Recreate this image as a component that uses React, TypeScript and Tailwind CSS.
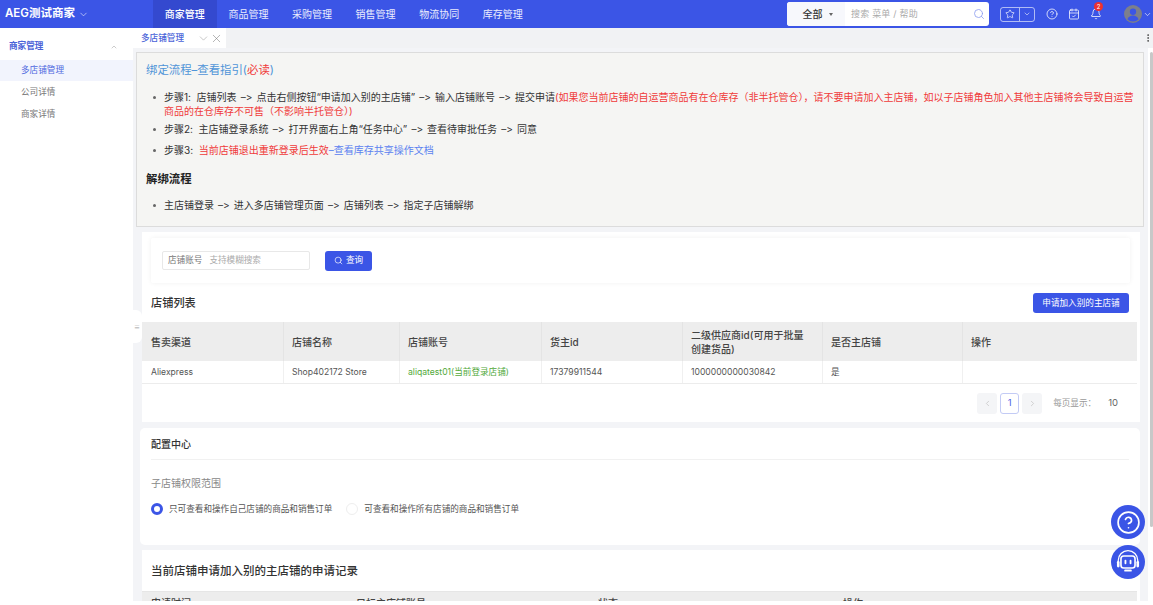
import React from "react";
import { ChevronDown, ChevronUp, ChevronLeft, ChevronRight, Search, Star, CircleHelp, CalendarCheck, Bell, X, MoreVertical } from "lucide-react";

const FONT = { fontFamily: '"Inter","Noto Sans CJK SC","Noto Sans",sans-serif' };

const NAV = ["商家管理", "商品管理", "采购管理", "销售管理", "物流协同", "库存管理"];

function Header() {
  return (
    <header className="flex h-[28px] shrink-0 items-center bg-[#3b55e6] text-white">
      <div className="flex w-[153px] shrink-0 items-center gap-[3px] pl-[5px] text-[11.5px] font-semibold">
        <span>AEG测试商家</span>
        <ChevronDown size={11} strokeWidth={1.5} className="text-white/80" />
      </div>
      <nav className="flex h-full">
        {NAV.map((n, i) => (
          <div
            key={n}
            className={`flex h-full w-[63.6px] items-center justify-center text-[10px] ${i === 0 ? "bg-[#3449cf] font-medium" : "text-white/90"}`}
          >
            {n}
          </div>
        ))}
      </nav>
      <div className="ml-auto flex h-[24px] w-[202px] items-center overflow-hidden rounded-[3px] bg-white">
        <div className="flex h-full w-[58px] items-center justify-center gap-[6px] bg-[#f7f8fc] pl-[3px] text-[10px] font-medium text-[#333]">
          全部
          <span className="mt-[1px] h-0 w-0 border-x-[2.5px] border-t-[3px] border-x-transparent border-t-[#666]" />
        </div>
        <span className="ml-[6px] flex-1 text-[9px] tracking-[0.2px] text-[#aaa]">搜索 菜单 / 帮助</span>
        <Search size={12} strokeWidth={1.6} className="mr-[4px] text-[#8a9bef]" />
      </div>
      <div className="ml-[11px] flex h-[15px] w-[35px] items-center rounded-[3px] border border-white/60">
        <div className="flex h-full w-[19px] items-center justify-center border-r border-white/60">
          <Star size={10} strokeWidth={1.6} />
        </div>
        <ChevronDown size={8} strokeWidth={1.6} className="ml-[3px]" />
      </div>
      <CircleHelp size={12} strokeWidth={1.5} className="ml-[11px]" />
      <CalendarCheck size={12} strokeWidth={1.5} className="ml-[10px]" />
      <div className="relative ml-[10px] h-[12px] w-[12px]">
        <Bell size={12} strokeWidth={1.5} />
        <span className="absolute left-[4px] top-[-6px] flex h-[9px] w-[9px] items-center justify-center rounded-full bg-[#ee3030] text-[6px] leading-none">2</span>
      </div>
      <svg viewBox="0 0 24 24" className="ml-[22px] h-[18px] w-[18px] shrink-0">
        <circle cx="12" cy="12" r="12" fill="#7c7f8c" />
        <circle cx="12" cy="9" r="4.2" fill="#3b55e6" />
        <path d="M4.5 19c1.6-3.4 4.4-5 7.5-5s5.900 1.600 7.500 5a11 11 0 0 1-15 0z" fill="#3b55e6" />
      </svg>
      <ChevronDown size={9} strokeWidth={1.6} className="ml-[1px] mr-[1px] shrink-0" />
    </header>
  );
}

function Sidebar() {
  return (
    <aside className="w-[133px] shrink-0 bg-white">
      <div className="flex h-[32px] items-center justify-between pl-[9px] pr-[15px] pt-[5px] text-[8.6px] font-semibold text-[#4a63d8]">
        商家管理
        <ChevronUp size={8} strokeWidth={1.5} className="text-[#999]" />
      </div>
      <div className="flex h-[21px] items-center bg-[#f2f4fd] pl-[21px] text-[8.6px] text-[#5068e0]">多店铺管理</div>
      <div className="flex h-[22px] items-center pl-[21px] text-[8.6px] text-[#777]">公司详情</div>
      <div className="flex h-[22px] items-center pl-[21px] text-[8.6px] text-[#777]">商家详情</div>
    </aside>
  );
}

function Arrow() {
  return <span className="mx-[1.3px]">–&gt;</span>;
}

function Bullet({ children, className = "" }: { children: React.ReactNode; className?: string }) {
  return (
    <li className={`relative pl-[18px] text-[10px] leading-[13.5px] text-[#333] [font-feature-settings:'calt'_0] ${className}`}>
      <span className="absolute left-[7px] top-[5px] h-[3px] w-[3px] rounded-full bg-[#666]" />
      {children}
    </li>
  );
}

function Notice() {
  return (
    <section className="ml-[3px] mr-[4px] mt-[4px] h-[175px] border border-[#dcdcdc] bg-[#f5f5f3] pl-[9px] pr-[2px] pt-[10px]">
      <h2 className="text-[11.4px] leading-[15px] text-[#4f94d8]">
        绑定流程–查看指引(<span className="text-[#f03a3a]">必读</span>)
      </h2>
      <ul className="mt-[13px]">
        <Bullet>
          步骤1:&nbsp; 店铺列表 <Arrow /> 点击右侧按钮“申请加入别的主店铺” <Arrow /> 输入店铺账号 <Arrow /> 提交申请
          <span className="text-[#f03a3a]">(如果您当前店铺的自运营商品有在仓库存（非半托管仓），请不要申请加入主店铺，如以子店铺角色加入其他主店铺将会导致自运营商品的在仓库存不可售（不影响半托管仓）)</span>
        </Bullet>
        <Bullet className="mt-[5px]">
          步骤2:&nbsp; 主店铺登录系统 <Arrow /> 打开界面右上角“任务中心” <Arrow /> 查看待审批任务 <Arrow /> 同意
        </Bullet>
        <Bullet className="mt-[7px]">
          步骤3:&nbsp; <span className="text-[#f03a3a]">当前店铺退出重新登录后生效</span>
          <span className="text-[#5b82f0]">–查看库存共享操作文档</span>
        </Bullet>
      </ul>
      <h3 className="mt-[15px] text-[11.4px] font-semibold leading-[15px] text-[#222]">解绑流程</h3>
      <ul className="mt-[12px]">
        <Bullet>主店铺登录 <Arrow /> 进入多店铺管理页面 <Arrow /> 店铺列表 <Arrow /> 指定子店铺解绑</Bullet>
      </ul>
    </section>
  );
}

const COLS1 = [
  { w: "w-[141px]", h: "售卖渠道", v: "Aliexpress" },
  { w: "w-[116px]", h: "店铺名称", v: "Shop402172 Store" },
  { w: "w-[142px]", h: "店铺账号", v: "aliqatest01(当前登录店铺)", green: true },
  { w: "w-[141px]", h: "货主id", v: "17379911544" },
  { w: "w-[140px]", h: "二级供应商id(可用于批量创建货品)", v: "1000000000030842" },
  { w: "w-[140px]", h: "是否主店铺", v: "是" },
  { w: "flex-1", h: "操作", v: "" },
];

function ShopTable() {
  return (
    <div className="mr-[3px]">
      <div className="flex h-[39px] bg-[#ededed]">
        {COLS1.map((c) => (
          <div key={c.h} className={`${c.w} flex items-center border-l border-[#e4e4e4] pl-[8px] pr-[12px] text-[10px] font-medium leading-[14px] text-[#444] first:border-l-0 first:pl-[9px]`}>
            {c.h}
          </div>
        ))}
      </div>
      <div className="flex h-[23px] border-b border-[#ececec] bg-white">
        {COLS1.map((c) => (
          <div key={c.h} className={`${c.w} flex items-center border-l border-[#f0f0f0] px-[8px] pt-[1px] text-[8.6px] first:border-l-0 first:pl-[9px] ${c.green ? "text-[#52a93a]" : "text-[#555]"}`}>
            {c.v}
          </div>
        ))}
      </div>
    </div>
  );
}

function Pager() {
  return (
    <div className="mr-[22px] mt-[9px] flex items-center justify-end">
      <div className="flex h-[21px] w-[20px] items-center justify-center rounded-[3px] bg-[#f4f5f7] text-[#c4c4c4]"><ChevronLeft size={9} /></div>
      <div className="ml-[3px] flex h-[21px] w-[19px] items-center justify-center rounded-[3px] border border-[#c3cbf5] bg-white text-[9.5px] text-[#4a63e6]">1</div>
      <div className="ml-[3px] flex h-[21px] w-[20px] items-center justify-center rounded-[3px] bg-[#f4f5f7] text-[#c4c4c4]"><ChevronRight size={9} /></div>
      <span className="ml-[11px] text-[8.6px] text-[#999]">每页显示：</span>
      <span className="ml-[12px] text-[9.5px] text-[#666]">10</span>
    </div>
  );
}

function ShopCard() {
  return (
    <section className="ml-[9px] mr-[8px] mt-[5px] h-[190px] bg-white pt-[6px]">
      <div className="ml-[9px] mr-[10px] flex h-[45px] items-center rounded-[2px] pl-[11px] shadow-[0_0_5px_rgba(0,0,0,0.06)]">
        <div className="flex h-[19px] w-[148px] items-center rounded-[2px] border border-[#e8e8e8] bg-white pl-[5px] text-[8.6px]">
          <span className="text-[#777]">店铺账号</span>
          <span className="ml-[7px] text-[#aaa]">支持模糊搜索</span>
        </div>
        <button className="ml-[15px] flex h-[20px] w-[47px] items-center justify-center gap-[3px] rounded-[3px] bg-[#3b55e6] text-[8.6px] text-white">
          <Search size={9} strokeWidth={1.8} />
          查询
        </button>
      </div>
      <div className="mb-[9px] ml-[9px] mr-[11px] mt-[10px] flex h-[20px] items-center justify-between">
        <h3 className="text-[11.2px] font-medium text-[#333]">店铺列表</h3>
        <button className="flex h-[20px] w-[96px] items-center justify-center rounded-[3px] bg-[#3b55e6] text-[8.6px] text-white">申请加入别的主店铺</button>
      </div>
      <ShopTable />
      <Pager />
    </section>
  );
}

function ConfigCard() {
  return (
    <section className="ml-[7px] mr-[8px] mt-[6px] h-[117px] rounded-[5px] bg-white px-[11px]">
      <div className="flex h-[32px] items-center border-b border-[#f1f1f1] pt-[2px] text-[10px] font-medium text-[#333]">配置中心</div>
      <div className="mt-[16px] text-[10px] leading-[14px] text-[#888]">子店铺权限范围</div>
      <div className="mt-[13px] flex items-center text-[8.6px] text-[#555]">
        <span className="h-[12px] w-[12px] rounded-full border-[3.5px] border-[#3b55e6] bg-white" />
        <span className="ml-[6px]">只可查看和操作自己店铺的商品和销售订单</span>
        <span className="ml-[14px] h-[12px] w-[12px] rounded-full border border-[#eeeeee] bg-white" />
        <span className="ml-[6px]">可查看和操作所有店铺的商品和销售订单</span>
      </div>
    </section>
  );
}

function RecordsCard() {
  return (
    <section className="ml-[9px] mr-[8px] mt-[5px] flex-1 overflow-hidden bg-white">
      <h3 className="flex h-[41px] items-center pl-[9px] pt-[2px] text-[11.5px] font-medium text-[#333]">当前店铺申请加入别的主店铺的申请记录</h3>
      <div className="mr-[3px] flex h-[30px] border-t border-[#e6e6e6] bg-[#ededed] pt-[4px] text-[10px] font-medium leading-[14px] text-[#444]">
        <div className="w-[205px] px-[9px]">申请时间</div>
        <div className="w-[242px] px-[9px]">目标主店铺账号</div>
        <div className="w-[245px] px-[9px]">状态</div>
        <div className="flex-1 px-[9px]">操作</div>
      </div>
    </section>
  );
}

function RobotIcon() {
  return (
    <svg viewBox="0 0 24 24" className="h-[26px] w-[26px]" fill="none" stroke="white" strokeWidth="1.2">
      <path d="M3 13v-2.500a9 9 0 0 1 18 0V13" />
      <rect x="1.800" y="11" width="2.400" height="6" rx="1.200" fill="white" stroke="none" />
      <rect x="19.800" y="11" width="2.400" height="6" rx="1.200" fill="white" stroke="none" />
      <rect x="5.500" y="6.500" width="13" height="11" rx="2.500" strokeWidth="1.500" />
      <rect x="8.800" y="10" width="1.700" height="4" rx="0.800" fill="white" stroke="none" />
      <rect x="13.500" y="10" width="1.700" height="4" rx="0.800" fill="white" stroke="none" />
      <rect x="8.500" y="19" width="7" height="1.800" rx="0.800" fill="white" stroke="none" />
    </svg>
  );
}

export default function App() {
  return (
    <div className="relative h-[605px] w-[1153px] overflow-hidden bg-white" style={FONT}>
      <div className="flex h-[601px] flex-col overflow-hidden">
        <Header />
        <div className="flex min-h-0 flex-1">
          <Sidebar />
          <main className="flex min-w-0 flex-1 flex-col bg-[#f3f4f7]">
            <div className="flex h-[20px] shrink-0 items-center bg-[#f1f2f4]">
              <div className="flex h-full w-[93px] items-center bg-white pl-[8px] text-[8.6px] font-medium text-[#4a63d8]">
                多店铺管理
                <ChevronDown size={13} strokeWidth={1} className="ml-[13px] text-[#999]" />
                <X size={13} strokeWidth={1} className="text-[#777]" />
              </div>
              <MoreVertical size={10} strokeWidth={2} className="ml-auto text-[#444]" />
            </div>
            <div className="flex min-h-0 flex-1">
              <div className="flex min-w-0 flex-1 flex-col">
                <Notice />
                <ShopCard />
                <ConfigCard />
                <RecordsCard />
              </div>
              <div className="w-[5px] shrink-0 bg-white">
                <div className="ml-[2px] mt-[4px] h-[475px] w-[3px] rounded-full bg-[#c8c8c8]" />
              </div>
            </div>
          </main>
        </div>
      </div>
      <div className="absolute left-[133px] top-[310px] flex h-[33px] w-[9px] items-center rounded-r-[6px] bg-white pl-[1px] text-[6px] text-[#999]">≡</div>
      <div className="absolute left-[1111px] top-[505px] flex h-[34px] w-[34px] items-center justify-center rounded-full bg-[#3b55e6] text-white">
        <CircleHelp size={25} strokeWidth={1.6} />
      </div>
      <div className="absolute left-[1111px] top-[545px] flex h-[34px] w-[34px] items-center justify-center rounded-full bg-[#3b55e6]">
        <RobotIcon />
      </div>
    </div>
  );
}
